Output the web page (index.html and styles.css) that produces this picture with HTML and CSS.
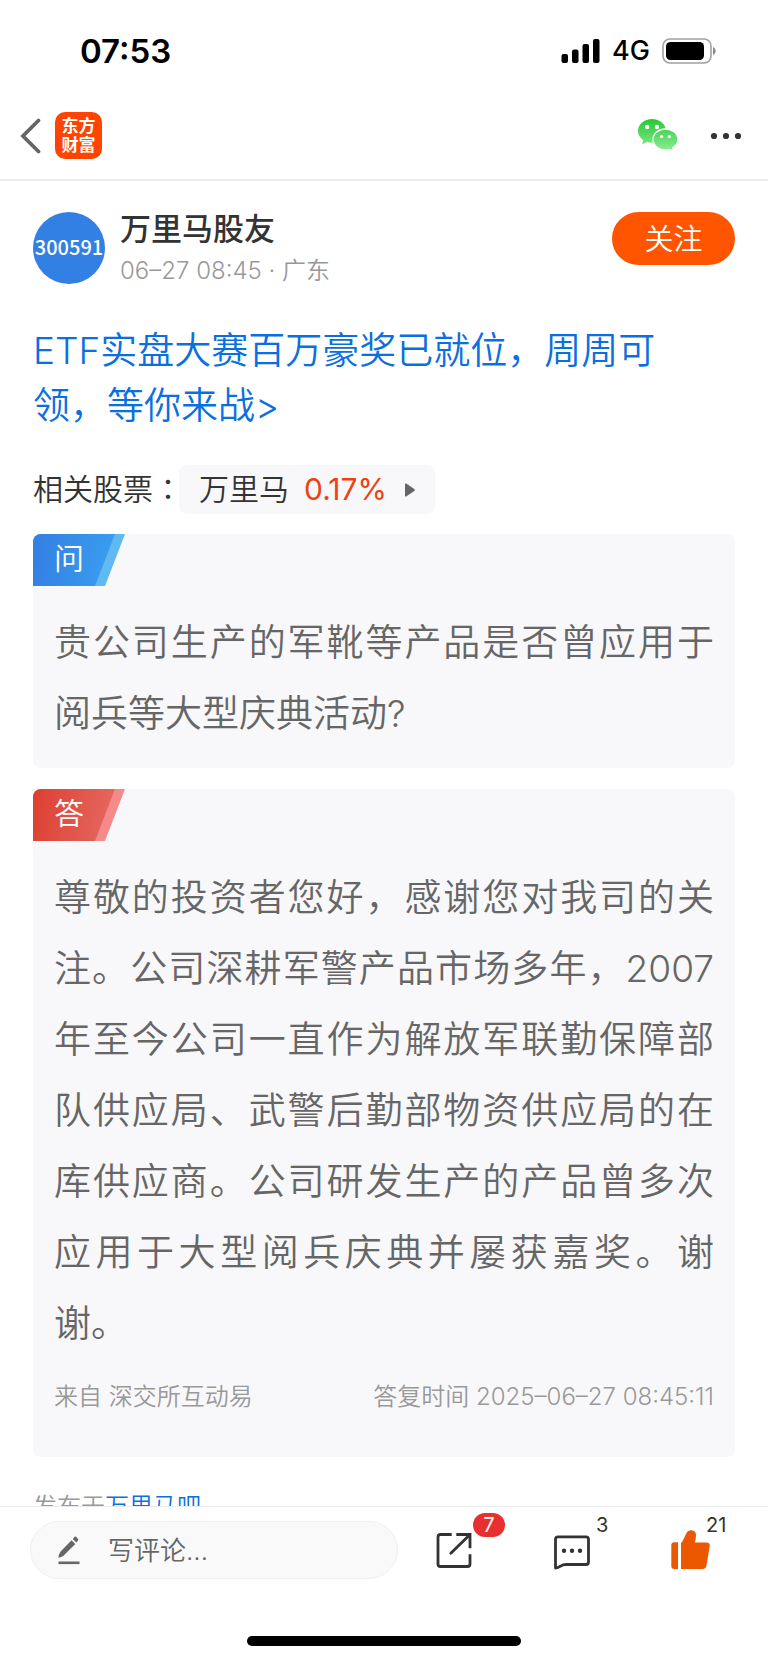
FILE: index.html
```html
<!DOCTYPE html>
<html lang="zh-CN">
<head>
<meta charset="utf-8">
<meta name="viewport" content="width=device-width, initial-scale=1">
<title>万里马股友</title>
<link rel="stylesheet" href="styles.css">
</head>
<body>
<div class="app">
  <div class="status">
    <span class="status-time">07:53</span>
    <div class="status-icons">
      <svg class="signal" width="39" height="25" viewBox="0 0 39 25" aria-hidden="true">
        <rect x="0.500" y="15" width="6.500" height="9" rx="2"/>
        <rect x="11" y="10.500" width="6.500" height="13.500" rx="2"/>
        <rect x="21.500" y="5" width="6.500" height="19" rx="2"/>
        <rect x="32" y="0" width="6.500" height="24" rx="2"/>
      </svg>
      <span class="network">4G</span>
      <svg class="battery" width="54" height="26" viewBox="0 0 54 26" aria-hidden="true">
        <rect x="1" y="1" width="48" height="24" rx="7" fill="none" stroke="#a0a0a0" stroke-width="1.600"/>
        <rect x="4" y="4" width="38" height="18" rx="4.500"/>
        <path d="M51 9c3.500 1.500 3.500 6.500 0 8z" fill="#8c8c8c"/>
      </svg>
    </div>
  </div>

  <header class="topbar">
    <button class="icon-btn back" aria-label="返回">
      <svg width="22" height="36" viewBox="0 0 22 36"><path d="M18.500 2.500 3 18 18.500 33.500" fill="none" stroke="#666" stroke-width="3.800" stroke-linecap="round"/></svg>
    </button>
    <a class="logo" href="#"><span>东方</span><span>财富</span></a>
    <button class="icon-btn wechat" aria-label="微信分享">
      <svg width="40" height="33" viewBox="0 0 40 33">
        <defs><linearGradient id="green" gradientUnits="userSpaceOnUse" x1="0" y1="0" x2="0" y2="32"><stop offset="0" stop-color="#25c933"/><stop offset="1" stop-color="#90ec98"/></linearGradient></defs>
        <path fill="url(#green)" d="M14 0C6.200 0 0 5.300 0 12c0 3.800 2 7 5.200 9.200L4 25.500l5-2.500c1.600.5 3.200.8 5 .8 7.700 0 14-5.200 14-11.900S21.700 0 14 0z"/>
        <path fill="url(#green)" stroke="#fff" stroke-width="1.400" d="M27.400 10C20.600 10 15 14.700 15 20.500S20.600 31 27.400 31c1.400 0 2.800-.2 4.100-.6l4.200 2-1-3.600c3.200-1.900 5.300-4.900 5.300-8.300C40 14.700 34.200 10 27.400 10z"/>
        <g fill="#fff"><circle cx="9.200" cy="8" r="2.200"/><circle cx="19" cy="8" r="2.200"/><circle cx="23.600" cy="17.500" r="1.600"/><circle cx="31.300" cy="17.500" r="1.600"/></g>
      </svg>
    </button>
    <button class="icon-btn" aria-label="更多">
      <svg width="32" height="8" viewBox="0 0 32 8" fill="#333"><circle cx="4" cy="4" r="3.100"/><circle cx="16" cy="4" r="3.100"/><circle cx="28" cy="4" r="3.100"/></svg>
    </button>
  </header>

  <main class="content">
    <section class="author">
      <div class="avatar">300591</div>
      <div class="author-info">
        <h1 class="author-name">万里马股友</h1>
        <p class="author-meta">06–27 08:45 · 广东</p>
      </div>
      <button class="follow">关注</button>
    </section>

    <a class="promo" href="#">ETF实盘大赛百万豪奖已就位，周周可领，等你来战&gt;</a>

    <div class="stocks">
      <span class="stocks-label">相关股票<span class="colon" lang="zh-TW">：</span></span>
      <a class="chip" href="#">
        <span>万里马</span><span class="change">0.17%</span>
        <svg width="10" height="14" viewBox="0 0 10 14" aria-hidden="true"><path d="M0 1.200Q0 0 1.200.6L9.300 6q.9 1 0 2L1.200 13.400Q0 14 0 12.800z" fill="#666"/></svg>
      </a>
    </div>

    <article class="card">
      <div class="tag tag-ask"><span class="tag-face">问</span></div>
      <p class="card-text">贵公司生产的军靴等产品是否曾应用于阅兵等大型庆典活动?</p>
    </article>

    <article class="card">
      <div class="tag tag-answer"><span class="tag-face">答</span></div>
      <p class="card-text">尊敬的投资者您好，感谢您对我司的关注。公司深耕军警产品市场多年，2007年至今公司一直作为解放军联勤保障部队供应局、武警后勤部物资供应局的在库供应商。公司研发生产的产品曾多次应用于大型阅兵庆典并屡获嘉奖。谢谢。</p>
      <footer class="card-foot"><span>来自 深交所互动易</span><span>答复时间 2025–06–27 08:45:11</span></footer>
    </article>

    <p class="posted">发布于<a href="#">万里马吧</a></p>
  </main>

  <footer class="bottom">
    <div class="toolbar">
      <label class="comment-box">
        <svg width="24" height="30" viewBox="0 0 24 30" fill="#666" aria-hidden="true">
          <path d="M14.600 5.200 18.300 8.900 7 20.200Q4.500 22.500 1.500 22.700 1.400 19.500 3.600 16.500z"/>
          <path d="M15.800 3.900 17.600 1.800Q18.500 1 19.400 2L21 4q.7.800 0 1.500L19.300 7.500z"/>
          <rect x="1.500" y="26.500" width="21" height="2.600"/>
        </svg>
        <input type="text" placeholder="写评论..." aria-label="写评论">
      </label>
      <div class="actions">
        <button class="action" aria-label="分享">
          <svg width="40" height="40" viewBox="0 0 40 40" fill="none" stroke="#333" stroke-width="2.800">
            <path d="M17.700 4.500H6.500Q4 4.500 4 7V34Q4 36.500 6.500 36.500H33.500Q36 36.500 36 34V24.300"/>
            <path d="M22.300 4.500H36V18.300"/>
            <path d="M35.500 5 16.800 23.300" stroke-linecap="round"/>
          </svg>
          <span class="badge">7</span>
        </button>
        <button class="action" aria-label="评论">
          <svg width="40" height="40" viewBox="0 0 40 40" fill="none" stroke="#333" stroke-width="2.800">
            <path d="M3.500 38V9.300Q3.500 6.800 6 6.800H34Q36.500 6.800 36.500 9.300V32Q36.500 34.500 34 34.500H14Q11 34.500 8.500 36.200 6 38 3.500 38z" stroke-linejoin="round"/>
            <g fill="#333" stroke="none"><circle cx="12" cy="20.700" r="2.200"/><circle cx="20" cy="20.700" r="2.200"/><circle cx="28" cy="20.700" r="2.200"/></g>
          </svg>
          <span class="count">3</span>
        </button>
        <button class="action" aria-label="点赞">
          <svg width="40" height="40" viewBox="0 0 40 40" fill="#ec5800">
            <path d="M4.300 12.300H8V39H4.300Q1.300 39 1.300 36V15.300Q1.300 12.300 4.300 12.300z"/>
            <path d="M11 12.500 12 12.300 16.300 3.500Q18 0 21.500 .2 26 .8 26 5 26 9 24.800 12.500H36.500Q40.200 12.700 39.700 16.200L36.400 35.800Q35.700 39 32.700 39H11z"/>
          </svg>
          <span class="count">21</span>
        </button>
      </div>
    </div>
    <div class="home-bar"></div>
  </footer>
</div>
</body>
</html>
```

FILE: styles.css
```css
* { box-sizing: border-box; }
body, h1, p { margin: 0; }
body {
  font-family: Inter, "Noto Sans CJK SC", sans-serif;
  font-weight: 350;
  color: #333;
  background: #fff;
}
button { padding: 0; border: 0; background: none; font: inherit; color: inherit; cursor: pointer; }
a { text-decoration: none; color: inherit; }
svg { display: block; flex: none; }

.app { display: flex; flex-direction: column; height: 100vh; overflow: hidden; }

.status {
  flex: none;
  display: flex;
  align-items: center;
  justify-content: space-between;
  height: 102px;
  padding: 0 52px 0 80px;
  color: #000;
}
.status-time { font-size: 33px; font-weight: 600; }
.status-icons { display: flex; align-items: center; gap: 12px; }
.network { font-size: 27px; font-weight: 500; line-height: 32px; }

.topbar {
  flex: none;
  display: flex;
  align-items: center;
  padding: 10px 26px 20px 20px;
  border-bottom: 2px solid #ededed;
}
.back { margin-right: 13px; }
.logo {
  display: flex;
  flex-direction: column;
  align-items: center;
  justify-content: center;
  width: 47px;
  height: 47px;
  border-radius: 10px;
  background: #ff4400;
  color: #fff;
  font-size: 17px;
  font-weight: 700;
  line-height: 19px;
}
.wechat { margin: 0 32px 0 auto; }

.content { flex: 1; min-height: 0; overflow: hidden; padding: 31px 33px 0; }

.author { display: flex; align-items: flex-start; }
.avatar {
  display: flex;
  align-items: center;
  justify-content: center;
  width: 72px;
  height: 72px;
  padding-bottom: 3px;
  border-radius: 50%;
  background: #3380e4;
  color: #fff;
  font-family: "Noto Sans CJK SC", sans-serif;
  font-size: 20px;
  font-weight: 500;
}
.author-info { flex: 1; padding-left: 15px; }
.author-name { font-size: 31px; font-weight: 500; line-height: 34px; }
.author-meta { margin-top: 10px; font-size: 24px; line-height: 30px; color: #999; }
.follow {
  width: 123px;
  height: 53px;
  padding-bottom: 4px;
  border-radius: 27px;
  background: #ff5500;
  color: #fff;
  font-size: 29px;
}

.promo { display: block; margin-top: 37px; padding-right: 33px; font-size: 37px; line-height: 55px; color: #0a6fe0; }

.stocks { display: flex; align-items: center; margin-top: 32px; font-size: 30px; line-height: 49px; }
.stocks-label { width: 146px; margin-top: -2px; white-space: nowrap; }
.colon { font-family: "Noto Sans CJK TC", sans-serif; }
.chip {
  display: flex;
  align-items: center;
  padding: 0 20px;
  border-radius: 8px;
  background: #f8f8fa;
}
.change { margin: 0 18px 0 15px; font-weight: 400; color: #ea4313; }

.card { margin-top: 20px; border-radius: 8px; background: #f8f8fa; overflow: hidden; }
.card + .card { margin-top: 21px; }
.tag { width: 92px; height: 52px; clip-path: polygon(0 0, 100% 0, 72px 100%, 0 100%); }
.tag-face {
  display: block;
  width: 82px;
  height: 100%;
  padding-left: 21px;
  clip-path: polygon(0 0, 100% 0, 62px 100%, 0 100%);
  color: #fff;
  font-size: 30px;
  line-height: 48px;
}
.tag-ask { background: #5ebaf0; }
.tag-ask .tag-face { background: linear-gradient(100deg, #337ee2, #3aa0f0); }
.tag-answer { background: #f48a8a; }
.tag-answer .tag-face { background: linear-gradient(100deg, #dc3f30, #e66a64); }
.card-text {
  padding: 21px 21px 19px;
  font-size: 37px;
  line-height: 71px;
  color: #666;
  text-align: justify;
}
.card-foot {
  display: flex;
  justify-content: space-between;
  padding: 3px 21px 44px;
  font-size: 24px;
  line-height: 32px;
  color: #999;
}

.posted { margin-top: 34px; font-size: 24px; line-height: 32px; color: #999; }
.posted a { color: #0a6fe0; }

.bottom { flex: none; border-top: 1px solid #ececec; background: #fff; }
.toolbar { display: flex; gap: 36px; padding: 14px 58px 0 30px; }
.comment-box {
  flex: 1;
  min-width: 0;
  display: flex;
  align-items: center;
  gap: 27px;
  height: 58px;
  padding: 0 26px;
  border: 1px solid #f0f0f0;
  border-radius: 30px;
  background: #f9f9f9;
}
.comment-box input {
  flex: 1;
  min-width: 0;
  padding: 0;
  border: 0;
  outline: 0;
  background: none;
  font: inherit;
  font-size: 26px;
  color: #333;
}
.comment-box input::placeholder { color: #666; opacity: 1; }
.actions { display: flex; align-items: center; gap: 78px; }
.action { position: relative; width: 40px; height: 40px; }
.badge, .count { position: absolute; font-size: 20px; font-weight: 400; line-height: 24px; }
.badge {
  left: 39px;
  top: -17px;
  width: 32px;
  border-radius: 12px;
  background: #e93030;
  color: #fff;
  text-align: center;
}
.count { left: 44px; top: -17px; }
.action:last-child .count { left: 36px; }
.home-bar { width: 274px; height: 10px; margin: 57px auto 17px; border-radius: 5px; background: #000; }
```
